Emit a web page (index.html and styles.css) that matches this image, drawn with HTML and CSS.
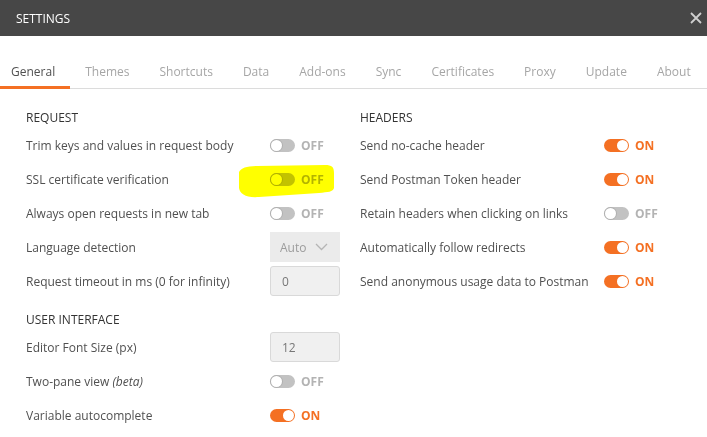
FILE: index.html
```html
<!DOCTYPE html>
<html>
<head>
<meta charset="utf-8">
<link rel="stylesheet" href="styles.css">
</head>
<body>
<div class="modal">
  <header class="titlebar">
    <span class="title">SETTINGS</span>
    <svg class="close" width="12" height="12" viewBox="0 0 12 12"><path d="M1 1 L11 11 M11 1 L1 11" stroke="#cfcfcf" stroke-width="1.8" fill="none"/></svg>
  </header>
  <nav class="tabs">
    <span class="tab active">General</span>
    <span class="tab">Themes</span>
    <span class="tab">Shortcuts</span>
    <span class="tab">Data</span>
    <span class="tab">Add-ons</span>
    <span class="tab">Sync</span>
    <span class="tab">Certificates</span>
    <span class="tab">Proxy</span>
    <span class="tab">Update</span>
    <span class="tab">About</span>
  </nav>
  <main class="content">
    <section class="col">
      <h3 class="heading">REQUEST</h3>
      <div class="row"><span class="label">Trim keys and values in request body</span><span class="switch off"><i class="track"><b></b></i>OFF</span></div>
      <div class="row hl-row"><span class="label">SSL certificate verification</span><span class="switch off"><i class="track"><b></b></i>OFF</span>
        <svg class="highlight" width="98" height="36" viewBox="0 0 98 36"><path d="M2 9 C4 5 10 3 20 3 L88 2 C95 2 97 4 97 10 L97 25 C96 29 91 29 82 30 L22 34 C9 35 3 31 2 25 Z" fill="#ffff00"/></svg>
      </div>
      <div class="row"><span class="label">Always open requests in new tab</span><span class="switch off"><i class="track"><b></b></i>OFF</span></div>
      <div class="row"><span class="label">Language detection</span><span class="select">Auto<svg width="13" height="8" viewBox="0 0 13 8"><path d="M1 1 L6.5 6.5 L12 1" stroke="#b5b5b5" stroke-width="1.3" fill="none"/></svg></span></div>
      <div class="row"><span class="label">Request timeout in ms (0 for infinity)</span><span class="input">0</span></div>
      <h3 class="heading ui">USER INTERFACE</h3>
      <div class="row"><span class="label">Editor Font Size (px)</span><span class="input">12</span></div>
      <div class="row"><span class="label">Two-pane view <em>(beta)</em></span><span class="switch off"><i class="track"><b></b></i>OFF</span></div>
      <div class="row"><span class="label">Variable autocomplete</span><span class="switch on"><i class="track"><b></b></i>ON</span></div>
    </section>
    <section class="col">
      <h3 class="heading">HEADERS</h3>
      <div class="row"><span class="label">Send no-cache header</span><span class="switch on"><i class="track"><b></b></i>ON</span></div>
      <div class="row"><span class="label">Send Postman Token header</span><span class="switch on"><i class="track"><b></b></i>ON</span></div>
      <div class="row"><span class="label">Retain headers when clicking on links</span><span class="switch off"><i class="track"><b></b></i>OFF</span></div>
      <div class="row"><span class="label">Automatically follow redirects</span><span class="switch on"><i class="track"><b></b></i>ON</span></div>
      <div class="row"><span class="label">Send anonymous usage data to Postman</span><span class="switch on"><i class="track"><b></b></i>ON</span></div>
    </section>
  </main>
</div>
</body>
</html>
```

FILE: styles.css
```css
* { box-sizing: border-box; }
html, body { margin: 0; padding: 0; background: #fff; }
body {
  width: 707px;
  height: 437px;
  overflow: hidden;
  font-family: "Open Sans", "Noto Sans", sans-serif;
  font-size: 12px;
  color: #505050;
}
.titlebar {
  height: 36px;
  background: #474747;
  display: flex;
  align-items: center;
  justify-content: space-between;
  padding: 0 5px 0 16px;
}
.title {
  color: #fff;
  font-size: 12px;
}
.close { display: block; }
.tabs {
  display: flex;
  margin-top: 17px;
  border-bottom: 1px solid #dcdcdc;
}
.tab {
  padding: 10px 15px 5px;
  line-height: 18px;
  border-bottom: 3px solid transparent;
  margin-bottom: -1px;
  color: #a6a6a6;
  white-space: nowrap;
}
.tab.active {
  padding-left: 11px;
  color: #505050;
  border-bottom-color: #f47023;
}
.content {
  display: grid;
  grid-template-columns: 334px 1fr;
  padding: 19px 0 0 26px;
}
.heading {
  margin: 0;
  font-size: 12px;
  font-weight: normal;
  color: #333;
  line-height: 20px;
}
.heading.ui { margin-top: 12px; }
.row {
  position: relative;
  height: 34px;
  display: flex;
  align-items: center;
}
.label {
  width: 244px;
  flex: none;
  white-space: nowrap;
}
.switch {
  display: flex;
  align-items: center;
  gap: 6px;
  font-size: 12px;
  font-weight: bold;
  position: relative;
  z-index: 1;
}
.switch.off { color: #b3b3b3; }
.switch.on { color: #f47023; }
.track {
  width: 25px;
  height: 13px;
  border-radius: 7px;
  display: flex;
  align-items: center;
  padding: 0 1px;
}
.track b {
  width: 11px;
  height: 11px;
  border-radius: 50%;
  background: #fff;
}
.off .track { background: #c2c2c2; }
.off .track b { box-shadow: 0 0 0 1px #b0b0b0; }
.on .track { background: #f47023; justify-content: flex-end; }
.select {
  width: 70px;
  height: 30px;
  background: #ebebeb;
  color: #9c9c9c;
  display: flex;
  align-items: center;
  justify-content: space-between;
  padding: 0 12px 0 10px;
}
.input {
  width: 70px;
  height: 30px;
  background: #f0f0f0;
  border: 1px solid #d9d9d9;
  border-radius: 3px;
  color: #777;
  display: flex;
  align-items: center;
  padding-left: 11px;
}
.highlight {
  position: absolute;
  left: 211px;
  top: 1px;
  mix-blend-mode: multiply;
  z-index: 2;
}
em { font-style: italic; }
```
